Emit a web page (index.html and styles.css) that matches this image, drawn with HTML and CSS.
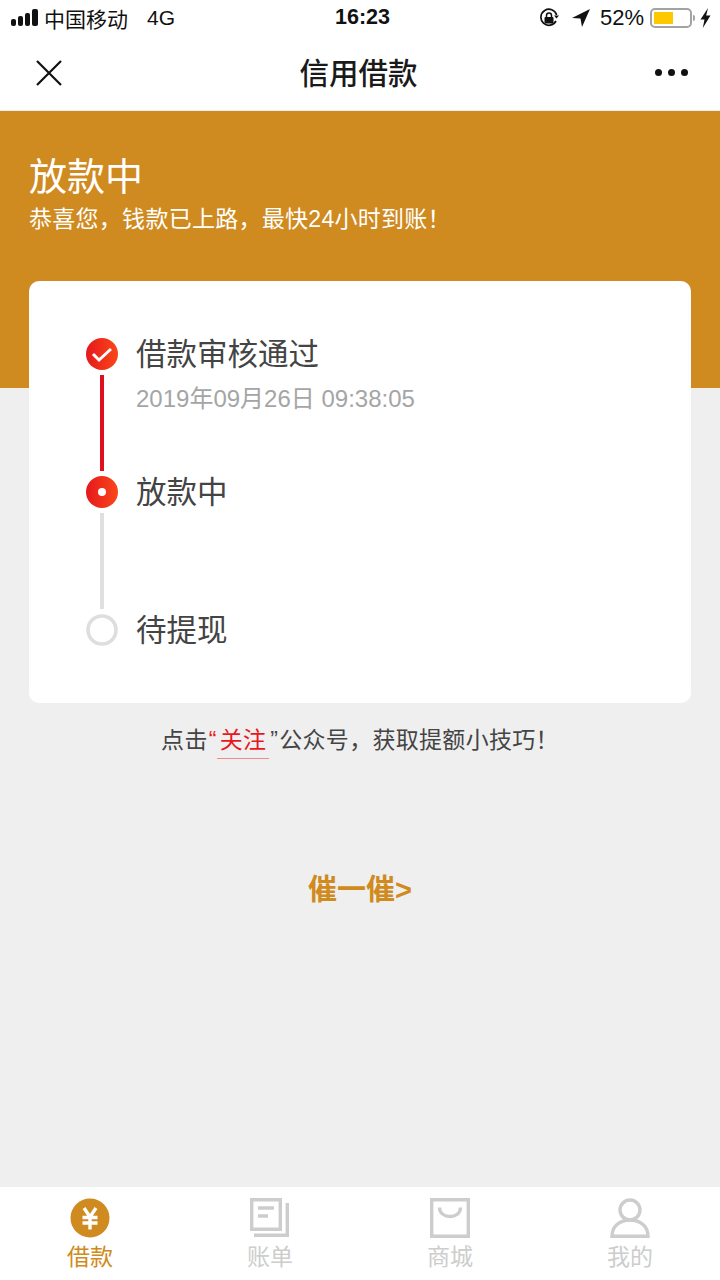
FILE: index.html
```html
<!DOCTYPE html>
<html lang="zh">
<head>
<meta charset="utf-8">
<title>信用借款</title>
<link rel="stylesheet" href="styles.css">
</head>
<body>
<div class="app">
  <div class="status">
    <div class="status-left">
      <svg class="signal" width="28" height="18" viewBox="0 0 28 18"><rect x="1" y="10" width="5" height="7" rx="2"/><rect x="8" y="7" width="5" height="10" rx="2"/><rect x="15" y="4" width="5" height="13" rx="2"/><rect x="22" y="0" width="6" height="17" rx="2"/></svg>
      <span class="carrier">中国移动</span>
      <span class="net">4G</span>
    </div>
    <div class="clock">16:23</div>
    <div class="status-right">
      <svg width="20" height="20" viewBox="0 0 20 20"><path d="M17 13A8 8 0 1 1 17.600 7" fill="none" stroke="#111" stroke-width="1.700"/><path d="M15 7.500h5l-2.500 3z" fill="#111"/><rect x="5.500" y="9" width="9" height="6.500" rx="1" fill="#111"/><path d="M7.500 9V7.500a2.500 2.500 0 0 1 5 0V9" fill="none" stroke="#111" stroke-width="1.500"/></svg>
      <svg class="loc" width="18" height="18" viewBox="0 0 18 18"><path d="M18 0 0 9l8.500.5L10 18z" fill="#111"/></svg>
      <span class="pct">52%</span>
      <span class="batt"><span class="batt-fill"></span></span>
      <span class="batt-tip"></span>
      <svg width="11" height="20" viewBox="0 0 11 20"><path d="M8 0 .5 11.500h4L2.800 20 10.500 7.500H6.200z" fill="#111"/></svg>
    </div>
  </div>
  <header class="nav">
    <svg class="nav-close" width="26" height="26" viewBox="0 0 26 26"><path d="M1 1 25 25M25 1 1 25" stroke="#111" stroke-width="2.200" fill="none"/></svg>
    <h1 class="nav-title">信用借款</h1>
    <div class="nav-more"><i></i><i></i><i></i></div>
  </header>
  <section class="hero">
    <div class="hero-title">放款中</div>
    <div class="hero-sub">恭喜您，钱款已上路，最快24小时到账！</div>
  </section>
  <main class="content">
    <div class="card">
      <div class="step">
        <div class="rail">
          <svg class="dot" width="32" height="32" viewBox="0 0 32 32"><defs><linearGradient id="g1" x1="0" x2="1"><stop offset="0" stop-color="#e6181d"/><stop offset="1" stop-color="#f9471a"/></linearGradient></defs><circle cx="16" cy="16" r="16" fill="url(#g1)"/><path d="M7 16 13 22 25 11" fill="none" stroke="#fff" stroke-width="3"/></svg>
          <div class="line line-red"></div>
        </div>
        <div class="step-body">
          <div class="step-name">借款审核通过</div>
          <div class="step-time">2019年09月26日 09:38:05</div>
        </div>
      </div>
      <div class="step">
        <div class="rail">
          <svg class="dot" width="32" height="32" viewBox="0 0 32 32"><circle cx="16" cy="16" r="16" fill="url(#g1)"/><circle cx="16" cy="16" r="4" fill="#fff"/></svg>
          <div class="line line-grey"></div>
        </div>
        <div class="step-body">
          <div class="step-name">放款中</div>
        </div>
      </div>
      <div class="step step-last">
        <div class="rail">
          <svg class="dot" width="32" height="32" viewBox="0 0 32 32"><circle cx="16" cy="16" r="14" fill="#fff" stroke="#dedede" stroke-width="3.600"/></svg>
        </div>
        <div class="step-body">
          <div class="step-name">待提现</div>
        </div>
      </div>
    </div>
    <p class="follow">点击<span class="q">“</span><span class="follow-link">关注</span><span class="q2">”</span>公众号，获取提额小技巧！</p>
    <a class="urge">催一催&gt;</a>
  </main>
  <nav class="tabbar">
    <div class="tab tab-on">
      <svg width="40" height="40" viewBox="0 0 40 40"><circle cx="20" cy="20" r="19.500" fill="#cf8a20"/><path d="M14 10 20 19 26 10M12.500 19.500h15M12.500 25h15M20 19v12.500" fill="none" stroke="#fff" stroke-width="3.400"/></svg>
      <span>借款</span>
    </div>
    <div class="tab">
      <svg width="40" height="40" viewBox="0 0 40 40"><path d="M1.700 1.700h28.600v29.600H1.700z" fill="none" stroke="#cdcdcd" stroke-width="3.400"/><path d="M37.300 5v32.300H4" fill="none" stroke="#cdcdcd" stroke-width="3.400"/><path d="M8 10h16M8 18h10" stroke="#cdcdcd" stroke-width="3.400"/></svg>
      <span>账单</span>
    </div>
    <div class="tab">
      <svg width="40" height="40" viewBox="0 0 40 40"><path d="M1.700 1.700h36.600v36.600H1.700z" fill="none" stroke="#cdcdcd" stroke-width="3.400"/><path d="M9.500 9.500c0 12 21 12 21 0" fill="none" stroke="#cdcdcd" stroke-width="3.400"/></svg>
      <span>商城</span>
    </div>
    <div class="tab">
      <svg width="40" height="40" viewBox="0 0 40 40"><circle cx="20" cy="12" r="10" fill="none" stroke="#cdcdcd" stroke-width="3.400"/><path d="M2 38.300C2 28 10 22 20 22s18 6 18 16.300z" fill="none" stroke="#cdcdcd" stroke-width="3.400"/></svg>
      <span>我的</span>
    </div>
  </nav>
</div>
</body>
</html>
```

FILE: styles.css
```css
* { box-sizing: border-box; }
html, body { margin: 0; padding: 0; }
body {
  font-family: "Liberation Sans", "Noto Sans CJK SC", sans-serif;
  background: #efefef;
  color: #333;
}
.app { width: 720px; height: 1280px; display: flex; flex-direction: column; overflow: hidden; }

.status {
  height: 37px; flex: none; background: #fff; color: #111;
  display: flex; align-items: center; justify-content: space-between;
  padding: 0 9px 2px 10px; position: relative; font-size: 21px;
}
.status-left { display: flex; align-items: center; }
.signal { fill: #111; margin-right: 6px; }
.carrier { margin-right: 19px; }
.clock { position: absolute; left: 0; right: 0; top: 5px; text-align: center; font-weight: 700; font-size: 21.500px; padding-left: 5px; pointer-events: none; }
.status-right { display: flex; align-items: center; margin-top: 1px; }
.loc { margin: 0 10px 0 13px; }
.pct { margin-right: 6px; font-size: 22px; }
.batt { width: 42px; height: 20px; border: 2px solid #a3a3a3; border-radius: 5px; padding: 2px; display: block; }
.batt-fill { display: block; width: 19px; height: 100%; background: #fdc800; }
.batt-tip { width: 2px; height: 6px; background: #a3a3a3; margin: 0 5px 0 1px; border-radius: 0 2px 2px 0; }

.nav {
  height: 74px; flex: none; background: #fff; border-bottom: 1px solid #eee;
  display: flex; align-items: center; justify-content: space-between;
  padding: 0 32px 2px 36px; position: relative;
}
.nav-close { display: block; }
.nav-title {
  position: absolute; left: 0; right: 0; top: 1px; text-align: center; margin: 0;
  font-size: 29.500px; font-weight: 500; color: #1a1a1a; line-height: 72px; padding-right: 3px;
}
.nav-more { display: flex; gap: 6px; }
.nav-more i { width: 7px; height: 7px; border-radius: 50%; background: #111; display: block; }

.hero { height: 277px; flex: none; background: #cf8a20; color: #fff; padding: 40px 29px 0; }
.hero-title { font-size: 38px; line-height: 52px; }
.hero-sub { font-size: 23px; line-height: 30px; margin-top: 1px; letter-spacing: .28px; }

.content { flex: 1; display: flex; flex-direction: column; align-items: center; padding: 0 29px; margin-top: -107px; }
.card { width: 662px; height: 422px; flex: none; background: #fff; border-radius: 10px; padding: 57px 57px 0; }
.step { display: flex; height: 138px; }
.step-last { height: auto; }
.rail { width: 32px; display: flex; flex-direction: column; align-items: center; flex: none; }
.dot { display: block; flex: none; }
.line { width: 4px; height: 96px; margin-top: 5px; }
.line-red { background: #e0101e; }
.line-grey { background: #e0e0e0; }
.step-body { margin-left: 18px; }
.step-name { font-size: 30.500px; line-height: 32px; color: #444; }
.step-time { font-size: 24px; line-height: 30px; color: #a5a5a5; margin-top: 14px; }

.follow { margin: 19px 0 0; font-size: 23px; line-height: 34px; color: #444; white-space: nowrap; letter-spacing: .3px; }
.q { color: #e8171d; margin-left: 1px; }
.q2 { color: #444; margin: 0 1px 0 1px; }
.follow-link { display: inline-block; color: #e8171d; border-bottom: 1px solid #ee8b8d; padding: 0 3px; line-height: 36px; }
.urge { display: block; margin-top: 111px; font-size: 29px; line-height: 40px; font-weight: 700; color: #cf8a20; }

.tabbar { height: 93px; flex: none; background: #fff; display: grid; grid-template-columns: repeat(4, 180px); padding-top: 11px; }
.tab { display: flex; flex-direction: column; align-items: center; color: #cdcdcd; font-size: 23px; line-height: 34px; }
.tab svg { display: block; margin-bottom: 2px; }
.tab-on { color: #cf8a20; }
```
